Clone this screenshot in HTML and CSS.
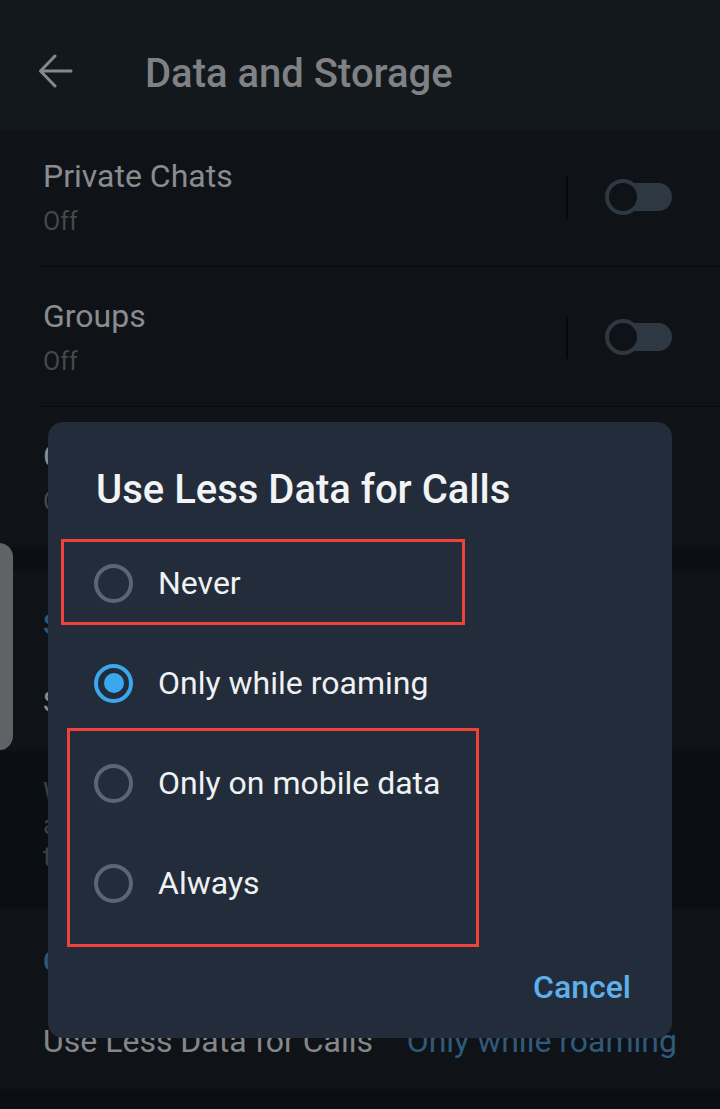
FILE: index.html
```html
<!DOCTYPE html>
<html lang="en">
<head>
<meta charset="utf-8">
<title>Data and Storage</title>
<link rel="stylesheet" href="styles.css">
</head>
<body>
<div class="screen">
  <header class="appbar">
    <svg class="back" width="40" height="40" viewBox="0 0 40 40" aria-hidden="true">
      <path d="M3 17 H33 M17 2 L2.5 17 L17 32" fill="none" stroke="#86898c" stroke-width="3" stroke-linecap="round" stroke-linejoin="round"/>
    </svg>
    <h1 class="appbar-title">Data and Storage</h1>
  </header>

  <section class="group first-group">
    <div class="row">
      <div class="row-text">
        <div class="row-title">Private Chats</div>
        <div class="row-sub">Off</div>
      </div>
      <div class="sep"></div>
      <div class="toggle"><span class="knob"></span></div>
    </div>
    <div class="row">
      <div class="row-text">
        <div class="row-title">Groups</div>
        <div class="row-sub">Off</div>
      </div>
      <div class="sep"></div>
      <div class="toggle"><span class="knob"></span></div>
    </div>
    <div class="row last">
      <div class="row-text">
        <div class="row-title">Channels</div>
        <div class="row-sub">Off</div>
      </div>
      <div class="sep"></div>
      <div class="toggle"><span class="knob"></span></div>
    </div>
  </section>

  <div class="band"></div>

  <section class="group stream">
    <div class="group-head">Streaming</div>
    <div class="plain-row">Stream Videos and Audio Files</div>
  </section>

  <div class="info">
    <span class="info-line">When enabled, you can start</span>
    <span class="info-line">a video while it is still</span>
    <span class="info-line">to be fully downloaded.</span>
  </div>

  <section class="group calls">
    <div class="group-head">Calls</div>
    <div class="value-row">
      <span class="value-label">Use Less Data for Calls</span>
      <span class="value">Only while roaming</span>
    </div>
  </section>

  <div class="pill"></div>

  <div class="dialog" role="dialog">
    <h2 class="dialog-title">Use Less Data for Calls</h2>
    <ul class="options">
      <li class="option"><span class="radio"></span><span class="opt-label">Never</span></li>
      <li class="option"><span class="radio checked"></span><span class="opt-label">Only while roaming</span></li>
      <li class="option"><span class="radio"></span><span class="opt-label">Only on mobile data</span></li>
      <li class="option"><span class="radio"></span><span class="opt-label">Always</span></li>
    </ul>
    <div class="actions"><span class="cancel">Cancel</span></div>
  </div>

  <div class="mark mark-one"></div>
  <div class="mark mark-two"></div>
</div>
</body>
</html>
```

FILE: styles.css
```css
* { box-sizing: border-box; }

html, body {
  margin: 0;
  padding: 0;
  background: #0b0e12;
}

body {
  font-family: Roboto, "Noto Sans", "Liberation Sans", sans-serif;
  width: 720px;
  height: 1109px;
  overflow: hidden;
}

.screen {
  position: relative;
  width: 720px;
  height: 1109px;
  background: #0b0e12;
}

/* App bar */
.appbar {
  height: 130px;
  background: #13181d;
  display: flex;
  align-items: center;
  padding-top: 17px;
}

.back {
  margin-left: 38px;
  width: 40px;
  height: 40px;
}

.appbar-title {
  margin: 0 0 0 67px;
  font-size: 40px;
  line-height: 48px;
  font-weight: 500;
  color: #7f8184;
}

/* List groups */
.group {
  background: #0f1318;
}

.row {
  display: flex;
  align-items: center;
  margin-left: 40px;
  padding: 29px 0 28px 3px;
  border-bottom: 1px solid #07090c;
}

.first-group .row:first-child {
  padding-top: 26px;
}

.row.last {
  border-bottom: none;
  padding-bottom: 29px;
}

.row-text {
  flex: 1;
}

.row-title {
  font-size: 32px;
  line-height: 40px;
  color: #8a8c8f;
}

.row-sub {
  margin-top: 10px;
  font-size: 25px;
  line-height: 32px;
  color: #45484b;
}

.sep {
  width: 2px;
  height: 43px;
  background: #06080a;
  margin-right: 37px;
}

.toggle {
  position: relative;
  width: 67px;
  height: 36px;
  margin-right: 48px;
}

.toggle::before {
  content: "";
  display: block;
  position: absolute;
  left: 16px;
  top: 4px;
  width: 51px;
  height: 28px;
  border-radius: 14px;
  background: #2e3842;
}

.knob {
  position: absolute;
  left: 0;
  top: 0;
  width: 36px;
  height: 36px;
  border-radius: 50%;
  border: 4px solid #2e3842;
  background: #0f1318;
}

.band {
  height: 24px;
  background: #0b0e12;
}

.group-head {
  padding: 34px 0 0 43px;
  font-size: 28px;
  line-height: 40px;
  font-weight: 500;
  color: #2c5878;
}

.stream {
  height: 180px;
}

.plain-row {
  margin-top: 37px;
  padding-left: 43px;
  font-size: 30px;
  line-height: 40px;
  color: #8a8c8f;
}

.info {
  height: 157px;
  padding: 26px 0 0 43px;
  background: #0b0e12;
  display: flex;
  flex-direction: column;
}

.info-line {
  font-size: 27px;
  line-height: 32px;
  color: #3c4043;
}

.calls {
  height: 181px;
}

.value-row {
  display: flex;
  justify-content: space-between;
  margin-top: 39px;
  padding: 0 43px;
  font-size: 32px;
  line-height: 40px;
}

.value-label {
  color: #858789;
}

.value {
  color: #2f5a7b;
}

/* Left side floating pill */
.pill {
  position: absolute;
  left: -20px;
  top: 543px;
  width: 33px;
  height: 207px;
  border-radius: 14px;
  background: #5f6366;
}

/* Dialog */
.dialog {
  position: absolute;
  left: 48px;
  top: 422px;
  width: 624px;
  height: 616px;
  border-radius: 15px;
  background: #222c3a;
  padding: 44px 41px 31px 46px;
  display: flex;
  flex-direction: column;
}

.dialog-title {
  margin: 0 0 0 2px;
  font-size: 40px;
  line-height: 48px;
  font-weight: 500;
  color: #f2f3f5;
}

.options {
  list-style: none;
  margin: 19px 0 0 0;
  padding: 0;
}

.option {
  height: 100px;
  display: flex;
  align-items: center;
}

.radio {
  width: 39px;
  height: 39px;
  border-radius: 50%;
  border: 4px solid #5a6675;
  flex: none;
  display: flex;
  align-items: center;
  justify-content: center;
}

.radio.checked {
  border-color: #3aa8ef;
}

.radio.checked::after {
  content: "";
  width: 20px;
  height: 20px;
  border-radius: 50%;
  background: #3aa8ef;
}

.opt-label {
  margin-left: 25px;
  font-size: 32px;
  line-height: 40px;
  color: #eff1f3;
}

.actions {
  margin-top: 34px;
  display: flex;
  justify-content: flex-end;
}

.cancel {
  font-size: 32px;
  line-height: 40px;
  font-weight: 500;
  color: #5eb0ea;
}

/* Annotation boxes */
.mark {
  position: absolute;
  border: 3px solid #f0423a;
}

.mark-one {
  left: 61px;
  top: 539px;
  width: 404px;
  height: 86px;
}

.mark-two {
  left: 67px;
  top: 728px;
  width: 412px;
  height: 219px;
}
```
